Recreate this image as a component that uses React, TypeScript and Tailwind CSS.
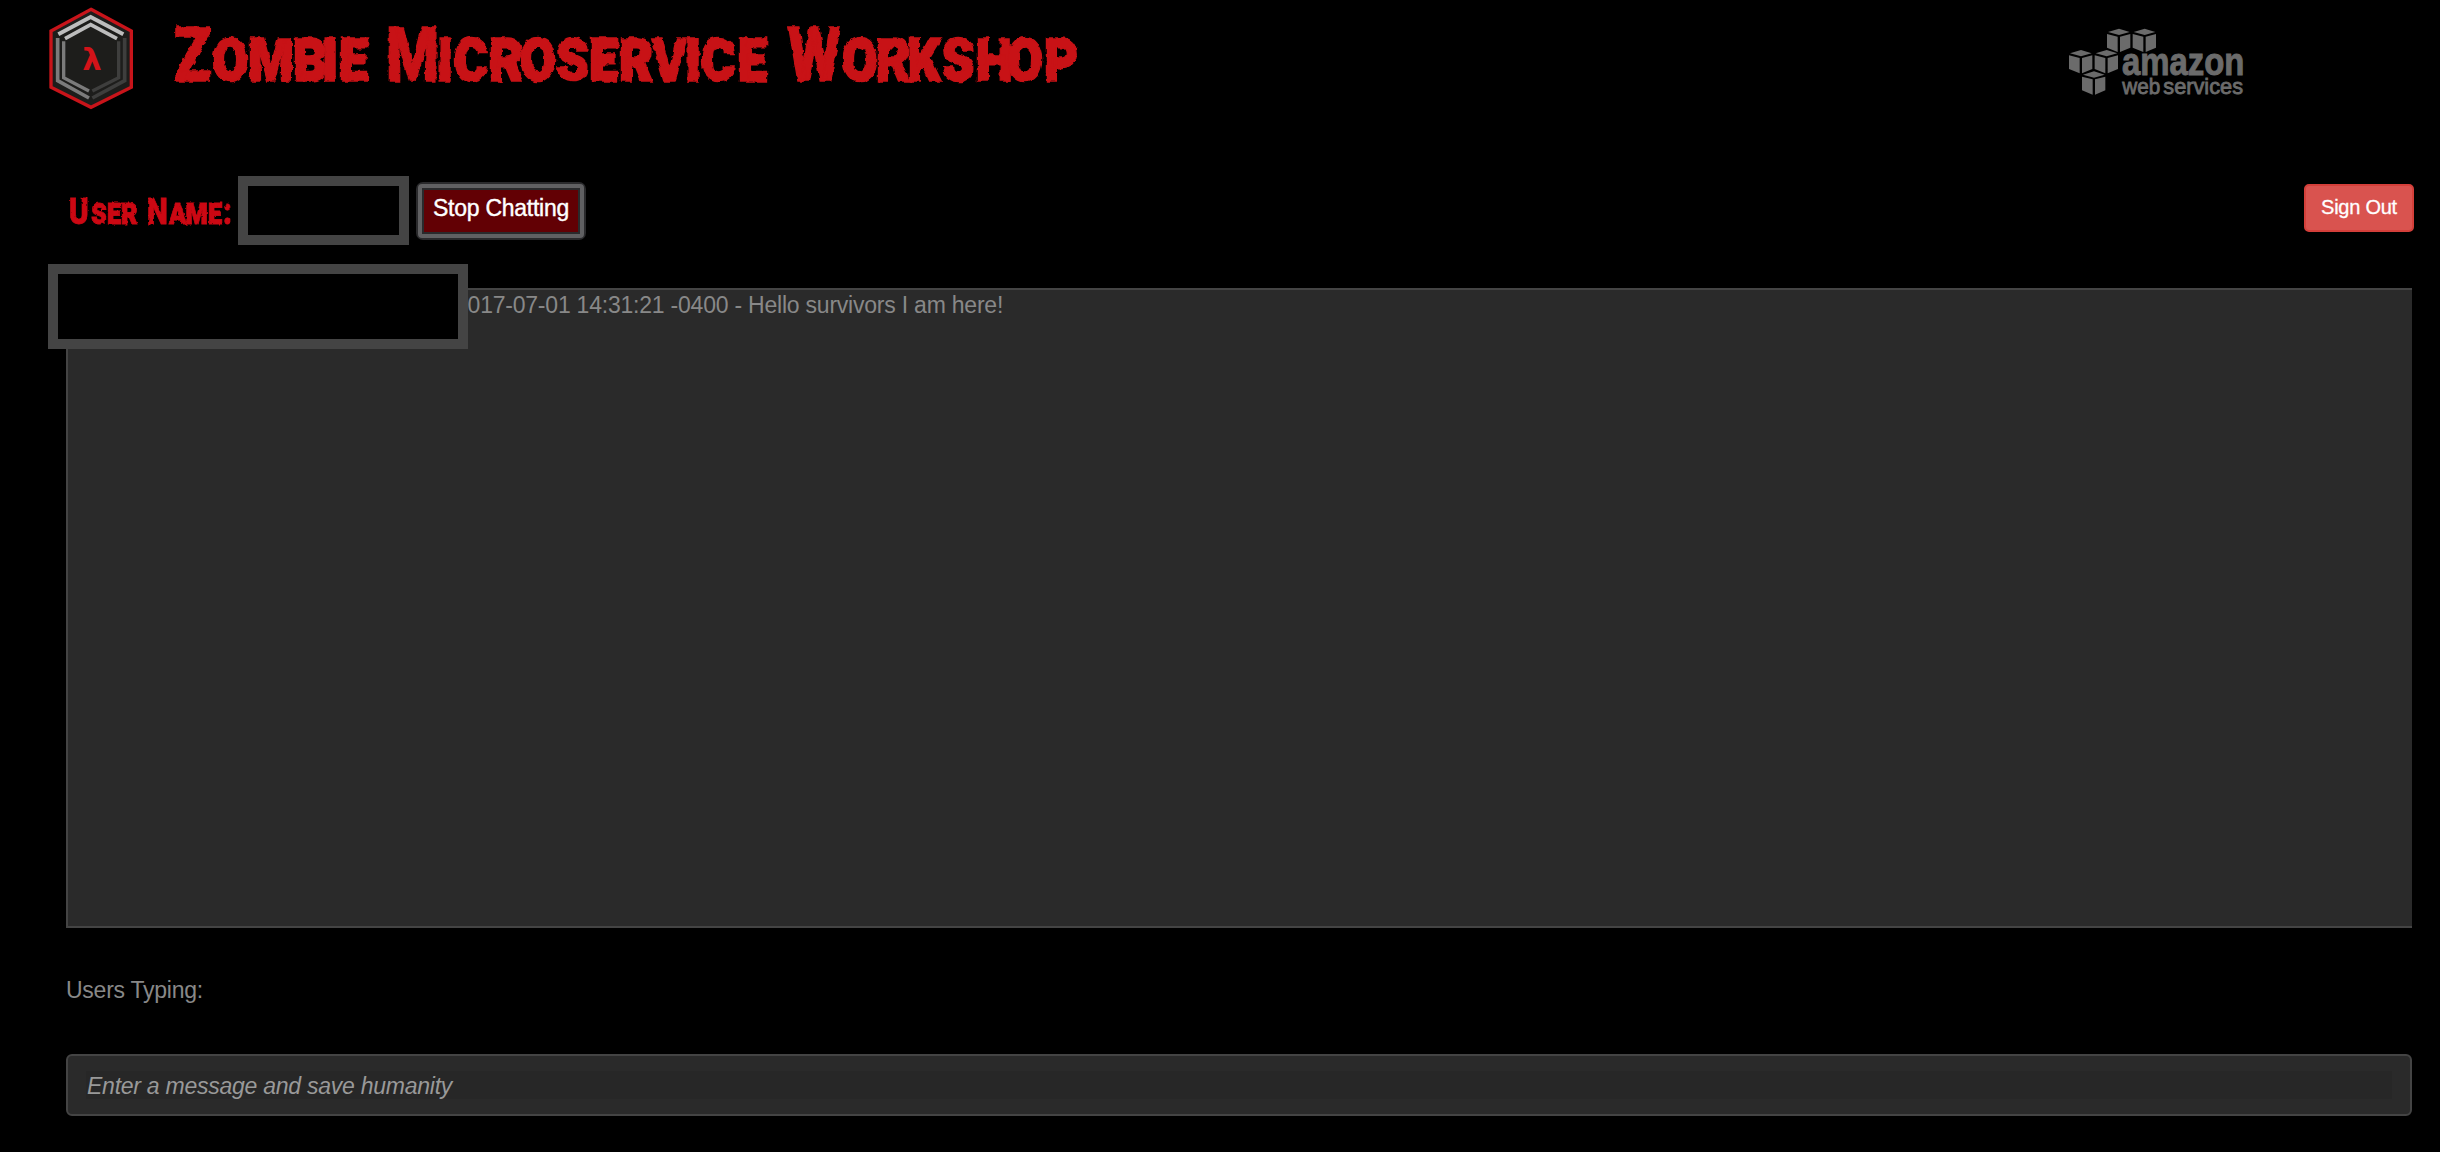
const CUBES = [
  [171, 41],
  [248, 41],
  [57, 105],
  [134, 105],
  [96, 169],
];

const SQUEEZE = 0.8;

const TITLE_WORDS = [
  { text: "Zombie", x: [174, 212, 248, 293, 322, 339] },
  { text: "Microservice", x: [386, 437, 454, 489, 520, 556, 589, 619, 652, 685, 701, 738] },
  { text: "Workshop", x: [788, 842, 876, 907, 942, 976, 1007, 1044] },
];

const LABEL_WORDS = [
  { text: "User", x: [69, 91, 107, 121] },
  { text: "Name:", x: [147, 169, 185.5, 208, 223] },
];

function place(xs: number[]) {
  return xs.map((x) => x / SQUEEZE).join(" ");
}

function LambdaLogo() {
  return (
    <svg className="h-[120px] w-[130px] shrink-0" viewBox="0 0 390 360" fill="none">
      <path d="M183 28 L304 93 V262 L183 322 L63 262 V93 Z" fill="#1d1d1b" stroke="#c8141a" strokeWidth="10" />
      <path d="M85 103 L182 51 L280 103" stroke="#bdbdbd" strokeWidth="12" />
      <path d="M105 116 L182 74 L261 116" stroke="#bdbdbd" strokeWidth="11" />
      <path d="M83 114 V242 L177 294" stroke="#7b7b7b" strokeWidth="11" />
      <path d="M101 124 V233 L177 273" stroke="#7b7b7b" strokeWidth="10" />
      <path d="M284 114 V242 L187 294" stroke="#3e3e3d" strokeWidth="11" />
      <path d="M266 124 V233 L187 273" stroke="#3e3e3d" strokeWidth="10" />
      <text
        x="186"
        y="209"
        textAnchor="middle"
        className="fill-[#d31319] font-['DejaVu_Sans',sans-serif] text-[92px] font-bold"
      >
        λ
      </text>
    </svg>
  );
}

function AwsLogo() {
  return (
    <svg className="h-[95px] w-[220px] shrink-0" viewBox="0 0 660 285" fill="#6b6b6b">
      {CUBES.map(([x, y]) => (
        <g key={`${x}-${y}`} transform={`translate(${x} ${y})`}>
          <path d="M3 10 L36 0 L68 10 L36 19 Z" />
          <path d="M0 16 L32 24 V70 L0 57 Z" />
          <path d="M39 24 L70 16 V57 L39 70 Z" />
        </g>
      ))}
      <text
        x="216"
        y="181"
        textLength="367"
        lengthAdjust="spacingAndGlyphs"
        stroke="#6b6b6b"
        strokeWidth="3"
        className="font-['Liberation_Sans',sans-serif] text-[117px] font-bold"
      >
        amazon
      </text>
      <text
        x="217"
        y="236"
        textLength="114"
        lengthAdjust="spacingAndGlyphs"
        stroke="#6b6b6b"
        strokeWidth="2.5"
        className="font-['Liberation_Sans',sans-serif] text-[67px]"
      >
        web
      </text>
      <text
        x="340"
        y="236"
        textLength="239"
        lengthAdjust="spacingAndGlyphs"
        stroke="#6b6b6b"
        strokeWidth="2.5"
        className="font-['Liberation_Sans',sans-serif] text-[67px]"
      >
        services
      </text>
    </svg>
  );
}

function Title() {
  return (
    <h1 className="mt-[10px] shrink-0 tracking-normal">
      <svg className="h-[90px] w-[940px]" viewBox="160 10 940 90">
        <filter id="rough-title" x="-2%" y="-20%" width="104%" height="140%" colorInterpolationFilters="sRGB">
          <feTurbulence type="fractalNoise" baseFrequency="0.14" numOctaves="2" seed="4" />
          <feDisplacementMap in="SourceGraphic" scale="5" xChannelSelector="R" yChannelSelector="G" />
        </filter>
        <g filter="url(#rough-title)">
          <g transform={`scale(${SQUEEZE} 1)`}>
            {TITLE_WORDS.map((w) => (
              <text
                key={w.text}
                x={place(w.x)}
                y="81"
                stroke="#c81216"
                strokeWidth="1.5"
                className="fill-[#c81216] font-[Roboto,sans-serif] text-[76px] font-black [font-variant-caps:small-caps]"
              >
                {w.text}
              </text>
            ))}
          </g>
        </g>
      </svg>
    </h1>
  );
}

function UserLabel() {
  return (
    <svg className="h-[69px] w-[178px] shrink-0" viewBox="60 176 178 69">
      <filter id="rough-label" x="-5%" y="-20%" width="110%" height="140%" colorInterpolationFilters="sRGB">
        <feTurbulence type="fractalNoise" baseFrequency="0.25" numOctaves="2" seed="7" />
        <feDisplacementMap in="SourceGraphic" scale="2.5" xChannelSelector="R" yChannelSelector="G" />
      </filter>
      <g filter="url(#rough-label)">
        <g transform={`scale(${SQUEEZE} 1)`}>
          {LABEL_WORDS.map((w) => (
            <text
              key={w.text}
              x={place(w.x)}
              y="224"
              stroke="#cc0813"
              strokeWidth="0.8"
              className="fill-[#cc0813] font-[Roboto,sans-serif] text-[37px] font-black [font-variant-caps:small-caps]"
            >
              {w.text}
            </text>
          ))}
        </g>
      </g>
    </svg>
  );
}

export default function App() {
  return (
    <div className="flex h-[1152px] w-full flex-col overflow-hidden bg-black font-['Liberation_Sans',Arial,sans-serif] text-[23px] leading-[30px] tracking-[-0.25px] text-[#888888]">
      <header className="flex h-[176px] shrink-0 items-start pl-[30px]">
        <LambdaLogo />
        <Title />
        <div className="mt-[15px] mr-[170px] ml-auto tracking-normal">
          <AwsLogo />
        </div>
      </header>

      <div className="flex h-[112px] shrink-0 items-start pr-[26px] pl-[60px]">
        <UserLabel />
        <div className="h-[69px] w-[171px] shrink-0 border-10 border-[#444444] bg-black" />
        <button className="mt-[6px] ml-[7px] h-[58px] w-[170px] shrink-0 rounded-[7px] border-2 border-[#2a2a2c] bg-[#2a2a2c]">
          <span className="flex h-full w-full rounded-[4px] border-4 border-[#606062] bg-[#2a2a2c] p-[2px]">
            <span className="flex-1 bg-[#620004] pt-[3px] text-center text-white [-webkit-text-stroke:0.4px_white]">
              Stop Chatting
            </span>
          </span>
        </button>
        <button className="mt-2 ml-auto h-12 w-[110px] shrink-0 rounded-[5px] border-2 border-[#d43f3a] bg-[#d9534f] pb-[2px] text-[20px] leading-[28px] text-white [-webkit-text-stroke:0.3px_white]">
          Sign Out
        </button>
      </div>

      <main className="mr-7 ml-[66px] flex flex-col">
        <section className="relative h-[640px] border-2 border-r-0 border-[#444444] bg-[#2a2a2a]">
          <p className="pl-[387px] tracking-[-0.22px] whitespace-nowrap">
            2017-07-01 14:31:21 -0400 - Hello survivors I am here!
          </p>
          <div className="absolute -top-[26px] -left-5 h-[85px] w-[420px] border-10 border-[#444444] bg-black" />
        </section>
        <p className="mt-[47px]">Users Typing:</p>
        <div className="mt-[49px] flex h-[62px] items-center rounded-md border-2 border-[#444444] bg-[#2a2a2a] px-[18px]">
          <div className="h-7 flex-1 bg-[#272727] pl-px text-[#999999] italic">Enter a message and save humanity</div>
        </div>
      </main>
    </div>
  );
}
